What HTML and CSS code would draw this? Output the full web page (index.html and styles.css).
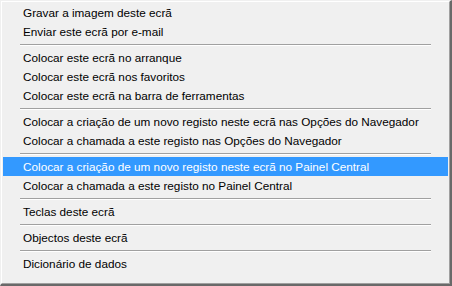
FILE: index.html
```html
<!DOCTYPE html>
<html lang="pt">
<head>
    <meta charset="UTF-8">
    <title>Menu</title>
    <link rel="stylesheet" href="styles.css">
</head>
<body>

    <div class="menu">
        <div class="menu-inner">
            <div class="item">Gravar a imagem deste ecrã</div>
            <div class="item">Enviar este ecrã por e-mail</div>
            <div class="sep"></div>
            <div class="item">Colocar este ecrã no arranque</div>
            <div class="item">Colocar este ecrã nos favoritos</div>
            <div class="item">Colocar este ecrã na barra de ferramentas</div>
            <div class="sep"></div>
            <div class="item">Colocar a criação de um novo registo neste ecrã nas Opções do Navegador</div>
            <div class="item">Colocar a chamada a este registo nas Opções do Navegador</div>
            <div class="sep"></div>
            <div class="item active">Colocar a criação de um novo registo neste ecrã no Painel Central</div>
            <div class="item">Colocar a chamada a este registo no Painel Central</div>
            <div class="sep"></div>
            <div class="item">Teclas deste ecrã</div>
            <div class="sep"></div>
            <div class="item">Objectos deste ecrã</div>
            <div class="sep"></div>
            <div class="item">Dicionário de dados</div>
        </div>
    </div>

</body>
</html>
```

FILE: styles.css
```css
body {
    margin: 0;
    padding: 0;
    background-color: #f0f0f0;
}
.menu {
    width: 452px;
    height: 286px;
    box-sizing: border-box;
    border-top: 1px solid #f0f0f0;
    border-left: 1px solid #f0f0f0;
    border-right: 2px solid #696969;
    border-bottom: 2px solid #696969;
    background-color: #f0f0f0;
    font-family: "Liberation Sans", Arial, sans-serif;
    font-size: 11.75px;
    color: #000;
}
.menu-inner {
    height: 100%;
    box-sizing: border-box;
    border-top: 1px solid #ffffff;
    border-left: 1px solid #ffffff;
    border-right: 1px solid #a0a0a0;
    border-bottom: 1px solid #a0a0a0;
    padding: 1px 1px 0 1px;
}
.item {
    height: 19px;
    line-height: 19px;
    padding-left: 20px;
    white-space: nowrap;
}
.item.active {
    background-color: #3399ff;
    color: #fff;
}
.sep {
    height: 1px;
    margin: 3px 17px 2px 17px;
    background-color: #a0a0a0;
    border-bottom: 1px solid #ffffff;
}
```
